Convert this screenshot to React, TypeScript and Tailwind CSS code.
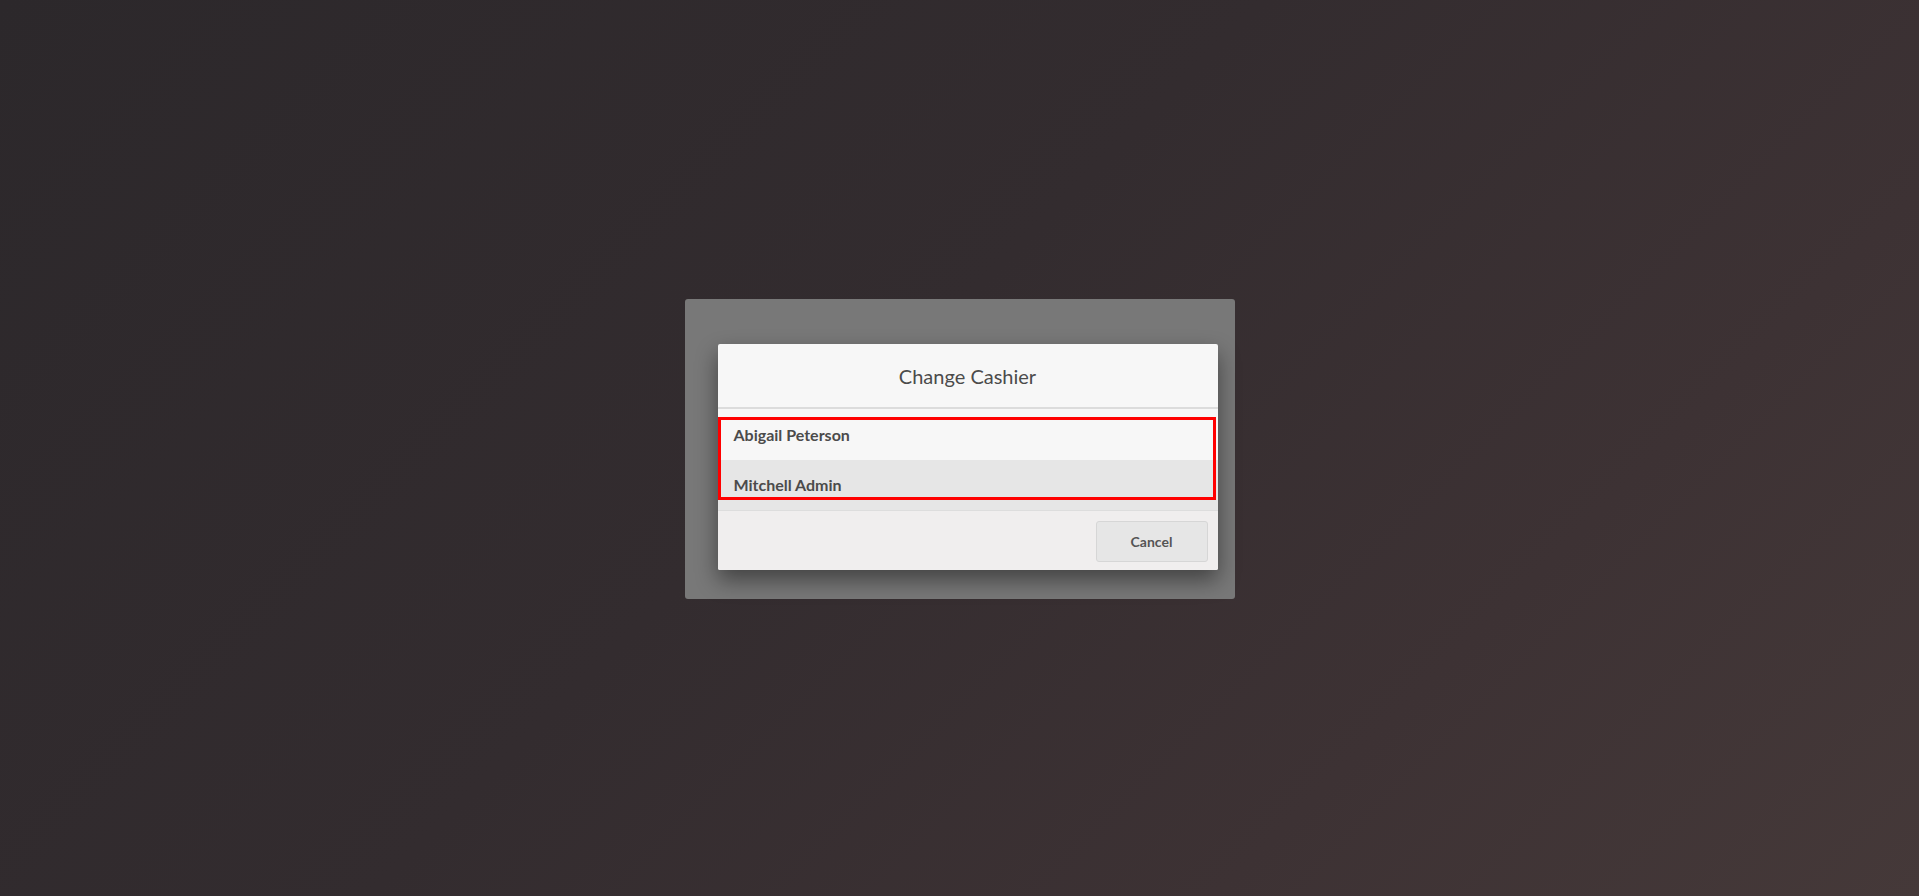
const cashiers = ["Abigail Peterson", "Mitchell Admin"];

export default function App() {
  return (
    <div
      className="flex h-[896px] w-full items-center justify-center bg-[linear-gradient(135deg,#2c282b_0%,#332c2f_45%,#3d3234_75%,#453939_100%)] pt-[2px]"
      style={{ fontFamily: "Lato, 'Noto Sans', sans-serif" }}
    >
      <div className="h-[300px] w-[550px] rounded-[3px] bg-[#787878] pl-[33px] pt-[45px]">
        <div className="flex h-[226px] w-[500px] flex-col overflow-hidden rounded-[2px] bg-[#f7f7f7] shadow-[0_10px_22px_rgba(0,0,0,0.45)]">
          <div className="flex h-[63px] shrink-0 items-center justify-center text-[20px] text-[#4b4b4b]">
            Change Cashier
          </div>
          <div className="h-[2px] shrink-0 bg-[#dcdcdc]" />
          <div className="relative h-[101px] shrink-0 overflow-hidden">
            {cashiers.map((name, i) => (
              <div
                key={name}
                className={
                  i === 0
                    ? "h-[51px] bg-[#f7f7f7] pl-[16px] pt-[16px] text-[16px] font-bold leading-[20px] text-[#4b4b4b]"
                    : "h-[51px] bg-[#e6e6e6] pl-[16px] pt-[15px] text-[16px] font-bold leading-[20px] text-[#4b4b4b]"
                }
              >
                {name}
              </div>
            ))}
            <div className="absolute left-0 top-[8px] h-[83px] w-[498px] border-[3px] border-[#ff0000]" />
          </div>
          <div className="flex flex-1 items-start justify-end border-t border-[#dddddd] bg-[#f0eeee] pr-[10px] pt-[10px]">
            <button className="h-[41px] w-[112px] rounded-[3px] border border-[#d6d6d6] bg-[#e6e6e6] text-[14px] font-bold text-[#555555]">
              Cancel
            </button>
          </div>
        </div>
      </div>
    </div>
  );
}
